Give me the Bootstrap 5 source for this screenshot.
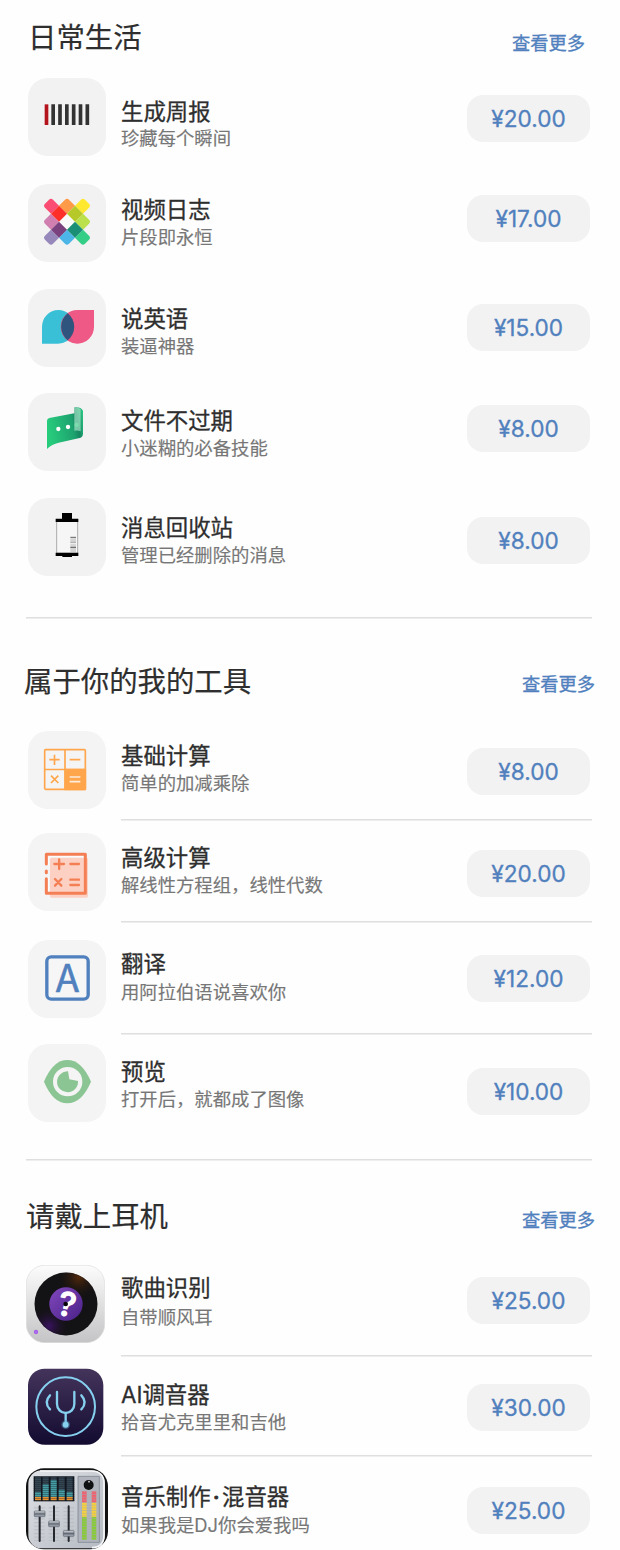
<!DOCTYPE html>
<html lang="zh-CN">
<head>
<meta charset="utf-8">
<meta name="viewport" content="width=device-width, initial-scale=1">
<title>应用商店</title>
<link href="https://cdn.jsdelivr.net/npm/bootstrap@5.3.0/dist/css/bootstrap.min.css" rel="stylesheet">
<style>
body{background:#fefefe;color:#2e2e2e;font-family:Inter,"Noto Sans CJK SC",sans-serif}
.store{width:620px;height:1550px;overflow:hidden}
.sec-head{height:var(--h);padding-left:var(--x)}
.sec-head h2{font-size:28.4px;line-height:42px;margin:var(--t) 0 0;font-weight:400;white-space:nowrap;-webkit-text-stroke:.2px}
.sec-head a{font-size:18.3px;line-height:26px;margin:var(--l) var(--r) 0 auto;color:#5080bd;white-space:nowrap;-webkit-text-stroke:.3px}
.head-a{--h:78px;--x:28px;--t:17px;--l:30px;--r:35px}
.head-b{--h:112px;--x:24px;--t:42px;--l:52px;--r:25px}
.head-c{--h:104px;--x:26px;--t:35px;--l:46px;--r:25px}
.app-row{height:var(--h);padding:0 30px 0 28px}
.tile{width:78px;height:78px;border-radius:20px;background:#f2f2f2;flex:none}
.tile svg,.art svg{display:block;width:100%;height:100%}
.art{flex:none}
.info{margin:var(--t) 0 0 15px;white-space:nowrap}
.info h3{font-size:22.4px;line-height:31px;margin:0;font-weight:400;-webkit-text-stroke:.3px}
.info p{font-size:18.35px;line-height:26px;margin:calc(var(--s) - 2px) 0 0;color:#777;-webkit-text-stroke:.15px}
.price{width:123px;height:47px;border-radius:16px;background:#f2f2f2;color:#5080bd;font-size:22.6px;line-height:48px;padding:0;border:0;margin:var(--p) 0 0 auto;flex:none;-webkit-text-stroke:.3px}
.rule,.rule-in{height:2px;background:linear-gradient(#dfdfdf 50%,#eee 50%);margin:0 28px 0 26px}
.rule-in{margin-left:121px;margin-bottom:var(--g)}
.r1{--h:106px;--t:18px;--s:-.5px;--p:17px}
.r2{--h:105px;--t:10px;--s:.5px;--p:11px}
.r3{--h:104px;--t:14px;--s:.5px;--p:15px}
.r4{--h:105px;--t:12px;--s:.5px;--p:12px}
.r5{--h:119px;--t:14px;--s:.5px;--p:19px}
.r6{--h:88px;--t:9px;--s:1px;--p:17px}
.r7{--h:88px;--t:9px;--s:.5px;--p:17px}
.r8{--h:93px;--t:8px;--s:1.5px;--p:15px}
.r9{--h:115px;--t:12px;--s:.5px;--p:24px}
.r10{--h:90px;--t:7px;--s:3px;--p:12px}
.r11{--h:87px;--t:11px;--s:.5px;--p:16px}
.r12{--h:82px;--t:13px;--s:2px;--p:19px}
.g12{--g:12px}.g17{--g:17px}.g9{--g:9px}.g11{--g:11px}
.soft .tile{background:#f4f4f4}
.art-song{width:79px;height:78px;margin:0 1px 0 -2px}
.art-tuner{width:78px;height:77px}
.art-mixer{width:82px;height:82px;margin:0 -2px}
.dot{display:inline-block;width:11.5px;text-align:center;-webkit-text-stroke:1px}
</style>
</head>
<body>
<main class="store">
<section>
<header class="sec-head head-a d-flex align-items-start"><h2>日常生活</h2><a href="#" class="text-decoration-none">查看更多</a></header>
<div class="app-row r1 d-flex align-items-start">
<div class="tile"><svg viewBox="84 234 234 234"><path fill="#b3141c" d="M134 313h11v62h-11z"/><path fill="#333" d="M154 313h11v62h-11zM174.500 313h11v62h-11zM195 313h11v62h-11zM215.500 313h11v62h-11zM236 313h11v62h-11zM256.500 313h11v62h-11z"/></svg></div>
<div class="info"><h3>生成周报</h3><p>珍藏每个瞬间</p></div><button class="btn price">¥20.00</button></div>
<div class="app-row r2 d-flex align-items-start">
<div class="tile"><svg viewBox="24 27 234 234"><defs><path id="corner" d="M24 0 0 24-18 6Q-24 0-18-6L-6-18Q0-24 6-18Z"/><path id="side" d="M24 0 0 24-24 0-6-18Q0-24 6-18Z"/><path id="cell" d="M24 0 0 24-24 0 0-24Z"/></defs>
<use href="#cell" fill="#fafafa" transform="translate(141 140)"/>
<use href="#corner" fill="#fb4c74" transform="translate(93 92)"/><use href="#side" fill="#ff9a48" transform="translate(141 92)"/><use href="#corner" fill="#ffe930" transform="translate(189 92) rotate(90)"/>
<use href="#side" fill="#d07fb0" transform="translate(93 140) rotate(-90)"/><use href="#side" fill="#bae04c" transform="translate(189 140) rotate(90)"/>
<use href="#corner" fill="#9788bb" transform="translate(93 188) rotate(-90)"/><use href="#side" fill="#4cb6e8" transform="translate(141 188) rotate(180)"/><use href="#corner" fill="#35ce87" transform="translate(189 188) rotate(180)"/>
<use href="#cell" fill="#fd2f28" transform="translate(117 116)"/><use href="#cell" fill="#b6c928" transform="translate(165 116)"/><use href="#cell" fill="#79427f" transform="translate(117 164)"/><use href="#cell" fill="#1b8f76" transform="translate(165 164)"/></svg></div>
<div class="info"><h3>视频日志</h3><p>片段即永恒</p></div><button class="btn price">¥17.00</button></div>
<div class="app-row r3 d-flex align-items-start">
<div class="tile"><svg viewBox="24 342 234 234"><path fill="#3ac0d6" d="M66 506V455a49 50 0 0 1 98 0 50 51 0 0 1-50 51z"/><path fill="#ee5985" d="M222 405v50a50 51 0 0 1-100 0 50 50 0 0 1 50-50z"/><path fill="#2f557e" d="M143 415a50 51 0 0 1 0 81 50 51 0 0 1 0-81"/></svg></div>
<div class="info"><h3>说英语</h3><p>装逼神器</p></div><button class="btn price">¥15.00</button></div>
<div class="app-row r4 d-flex align-items-start">
<div class="tile"><svg viewBox="24 39 234 234"><defs><linearGradient id="fg" x1="0" y1=".3" x2="1" y2=".1"><stop stop-color="#27cb7c"/><stop offset=".65" stop-color="#1da36f"/><stop offset=".8" stop-color="#168761"/><stop offset="1" stop-color="#2bc884"/></linearGradient></defs><path fill="url(#fg)" d="M81 207V122q0-6 7-8l75-14V82q20-2 26 10v69q0 10-10 13l-63 14q-20 4-35 19z"/><path fill="#b9efd5" opacity=".6" d="M163 82q12-1 19 5v67q-7-4-19-2z"/><circle cx="115" cy="147" r="6.500" fill="#fff"/><circle cx="144" cy="141" r="6.500" fill="#fff"/><circle cx="170" cy="135" r="6.500" fill="#7ddcae"/></svg></div>
<div class="info"><h3>文件不过期</h3><p>小迷糊的必备技能</p></div><button class="btn price">¥8.00</button></div>
<div class="app-row r5 d-flex align-items-start">
<div class="tile"><svg viewBox="24 354 234 234"><path fill="#f6f6f6" stroke="#888" stroke-width="2" d="M110 424h63v96h-63z"/><path d="M126 399h30v17h19v10h-68v-10h19zM107 518h68v10h-19v3h-29v-3h-20z"/><path fill="#d4d4d4" d="M151 475h17v15h-17zM151 498h17v18h-17z"/><path stroke="#444" stroke-width="2.500" d="M151 472h17M151 502h17"/><path stroke="#999" stroke-width="2" d="M151 487h17M151 495h17"/></svg></div>
<div class="info"><h3>消息回收站</h3><p>管理已经删除的消息</p></div><button class="btn price">¥8.00</button></div>
</section>
<div class="rule"></div>
<section class="soft">
<header class="sec-head head-b d-flex align-items-start"><h2>属于你的我的工具</h2><a href="#" class="text-decoration-none">查看更多</a></header>
<div class="app-row r6 d-flex align-items-start">
<div class="tile"><svg viewBox="24 33 234 234" fill="none" stroke="#ffa64c" stroke-width="5"><rect x="74" y="89" width="122" height="119" rx="3"/><path d="M135 88v121M74 148.500h122M88 119h31M103.500 104v31M149 119h32M93 167l22 22M115 167l-22 22"/><path fill="#ffa64c" d="M136 149h60v59h-60z"/><path stroke="#fbecdc" d="M149 171h32M149 185h32"/></svg></div>
<div class="info"><h3>基础计算</h3><p>简单的加减乘除</p></div><button class="btn price">¥8.00</button></div>
<div class="rule-in g12"></div>
<div class="app-row r7 d-flex align-items-start">
<div class="tile"><svg viewBox="24 340 234 234" fill="none" stroke="#f47f55" stroke-linecap="round"><rect x="90" y="414" width="114" height="120" rx="5" fill="#fcd1c3" stroke="none"/><path stroke="#fff" stroke-width="3" d="M86 437v-26h103M86 474v40" opacity=".8"/><path stroke-width="9" stroke-linejoin="round" d="M79 433v-29h117v117H79v-44M79 454v5"/><path stroke-width="7" d="M103 433h29M117.500 419v29M151 433h26M105 478l19 20M124 478l-19 20M151 480h26M151 496h26"/></svg></div>
<div class="info"><h3>高级计算</h3><p>解线性方程组，线性代数</p></div><button class="btn price">¥20.00</button></div>
<div class="rule-in g17"></div>
<div class="app-row r8 d-flex align-items-start">
<div class="tile"><svg viewBox="24 30 234 234"><rect x="80.500" y="80.500" width="124" height="127" rx="13" fill="#f6f6f6" stroke="#5080bd" stroke-width="10"/><text x="142.500" y="185" text-anchor="middle" font-family="Noto Sans CJK SC" font-size="115" fill="#5080bd" stroke="#5080bd" stroke-width="1.500">A</text></svg></div>
<div class="info"><h3>翻译</h3><p>用阿拉伯语说喜欢你</p></div><button class="btn price">¥12.00</button></div>
<div class="rule-in g9"></div>
<div class="app-row r9 d-flex align-items-start">
<div class="tile"><svg viewBox="24 343 234 234"><path fill="#8bc593" d="M72 456Q99 391 142 391T213 456Q185 521 142 521T72 456"/><circle cx="143" cy="456" r="44" fill="#f4f4f4"/><path fill="#8bc593" d="M144 425a31.500 31.500 0 1 0 30 29l-26-5z"/></svg></div>
<div class="info"><h3>预览</h3><p>打开后，就都成了图像</p></div><button class="btn price">¥10.00</button></div>
</section>
<div class="rule"></div>
<section>
<header class="sec-head head-c d-flex align-items-start"><h2>请戴上耳机</h2><a href="#" class="text-decoration-none">查看更多</a></header>
<div class="app-row r10 d-flex align-items-start">
<div class="art art-song"><svg viewBox="34 29 237 234"><defs><linearGradient id="sg" x2="0" y2="1"><stop stop-color="#fcfcfc"/><stop offset="1" stop-color="#c4c4c6"/></linearGradient><radialGradient id="warm" cx=".7" cy=".08" r=".35"><stop stop-color="#53290b"/><stop offset="1" stop-color="#131214" stop-opacity="0"/></radialGradient><radialGradient id="cool" cx=".23" cy=".85" r=".33"><stop stop-color="#3a1262"/><stop offset="1" stop-color="#131214" stop-opacity="0"/></radialGradient><linearGradient id="pg" x2="1" y2="1"><stop stop-color="#8148bd"/><stop offset="1" stop-color="#4a2187"/></linearGradient></defs><rect x="35" y="30" width="235" height="232" rx="55" fill="url(#sg)" stroke="#ddd" stroke-width="2"/><g><circle cx="154" cy="146" r="94.500" fill="#131214"/><circle cx="154" cy="146" r="94.500" fill="url(#warm)"/><circle cx="154" cy="146" r="94.500" fill="url(#cool)"/></g><circle cx="154" cy="146" r="50" fill="url(#pg)"/><text x="157" y="182" text-anchor="middle" transform="rotate(13 156 146)" font-family="Inter" font-weight="500" font-size="98" fill="#fff" stroke="#fff" stroke-width="4" stroke-linejoin="round">?</text><circle cx="153" cy="146" r="7" fill="#08050b"/><circle cx="64" cy="230" r="4.500" fill="#bd83ee" stroke="#a35be9" stroke-width="4"/></svg></div>
<div class="info"><h3>歌曲识别</h3><p>自带顺风耳</p></div><button class="btn price">¥25.00</button></div>
<div class="rule-in g11"></div>
<div class="app-row r11 d-flex align-items-start">
<div class="art art-tuner"><svg viewBox="39 39 234 231"><defs><linearGradient id="tg" x2="0" y2="1"><stop stop-color="#44345b"/><stop offset="1" stop-color="#130b30"/></linearGradient></defs><rect x="39" y="41" width="226" height="228" rx="50" fill="url(#tg)"/><g fill="none" stroke="#86d0ef" stroke-width="6" stroke-linecap="round"><circle cx="152" cy="155" r="88"/><path stroke-width="7" d="M126 111v36a26 27 0 0 0 52 0v-36M152 174v33M105 121q-20 21 0 42M199 121q20 21 0 42"/></g><circle cx="152" cy="209" r="13" fill="#5aa9cf" opacity=".4"/><circle cx="152" cy="209" r="9" fill="#86d0ef"/></svg></div>
<div class="info"><h3>AI调音器</h3><p>拾音尤克里里和吉他</p></div><button class="btn price">¥30.00</button></div>
<div class="rule-in g11"></div>
<div class="app-row r12 d-flex align-items-start">
<div class="art art-mixer"><svg viewBox="33 39 246 246"><defs><linearGradient id="mg" x2="1" y2="1"><stop stop-color="#dfe2e6"/><stop offset="1" stop-color="#b5bac2"/></linearGradient><linearGradient id="knob" x2="0" y2="1"><stop stop-color="#f0f2f5"/><stop offset=".5" stop-color="#626974"/><stop offset="1" stop-color="#b8bec7"/></linearGradient><pattern id="scan" width="24" height="6" patternUnits="userSpaceOnUse"><path fill="#111820" opacity=".5" d="M0 4h24v2H0z"/></pattern><pattern id="gap" width="30" height="8" patternUnits="userSpaceOnUse"><path fill="#a3a9b2" opacity=".7" d="M0 6h30v2H0z"/></pattern><pattern id="ticks" width="34" height="11" patternUnits="userSpaceOnUse"><path fill="#adb2b9" d="M0 4h34v2H0z"/></pattern></defs>
<rect x="33" y="40" width="246" height="243" rx="54" fill="#111"/><rect x="40" y="46" width="230" height="234" rx="40" fill="url(#mg)"/><path fill="none" stroke="#f5f6f7" stroke-width="5" d="M75 48h154q38 0 38 38v154q0 37-36 38"/>
<rect x="56" y="64" width="122" height="75" fill="#111820"/><path fill="#354653" d="M60 67h18v69H60zM83 67h18v69H83zM107 67h18v69h-18zM131 67h18v69h-18zM155 67h18v69h-18z"/><path fill="#459ca2" d="M60 111h18v16H60zM83 88h18v39H83zM107 75h18v52h-18zM131 104h18v23h-18zM155 111h18v16h-18z"/><path fill="#e99332" d="M60 126h18v10H60zM83 126h18v10H83zM107 126h18v10h-18zM131 126h18v10h-18zM155 126h18v10h-18z"/><path fill="url(#scan)" d="M56 64h122v75H56z"/>
<path fill="url(#ticks)" d="M57 153h32v105H57zM101 153h32v105h-32zM145 153h32v105h-32z"/><path stroke="#25282d" stroke-width="6" stroke-linecap="round" d="M74 154v104M117 154v104M161 154v104"/><g fill="url(#knob)" stroke="#555d68" stroke-width="2"><rect x="58" y="168" width="32" height="17" rx="2"/><rect x="101" y="198" width="32" height="17" rx="2"/><rect x="145" y="227" width="32" height="17" rx="2"/></g>
<path fill="#b0b5bd" stroke="#747c88" stroke-width="2" d="M189 64h64v198h-64z"/><circle cx="221" cy="90" r="15" fill="#101113"/><circle cx="222" cy="80" r="2.500" fill="#ddd"/><path fill="#f0606e" d="M201 109h14v34h-14zM230 109h14v34h-14z"/><path fill="#f5d03c" d="M201 143h14v43h-14zM230 143h14v43h-14z"/><path fill="#88cb34" d="M201 186h14v68h-14zM230 186h14v68h-14z"/><path fill="url(#gap)" d="M198 109h49v145h-49z"/></svg></div>
<div class="info"><h3>音乐制作<span class="dot">·</span>混音器</h3><p>如果我是DJ你会爱我吗</p></div><button class="btn price">¥25.00</button></div>
</section>
</main>
<script src="https://cdn.jsdelivr.net/npm/bootstrap@5.3.0/dist/js/bootstrap.bundle.min.js"></script>
</body>
</html>
